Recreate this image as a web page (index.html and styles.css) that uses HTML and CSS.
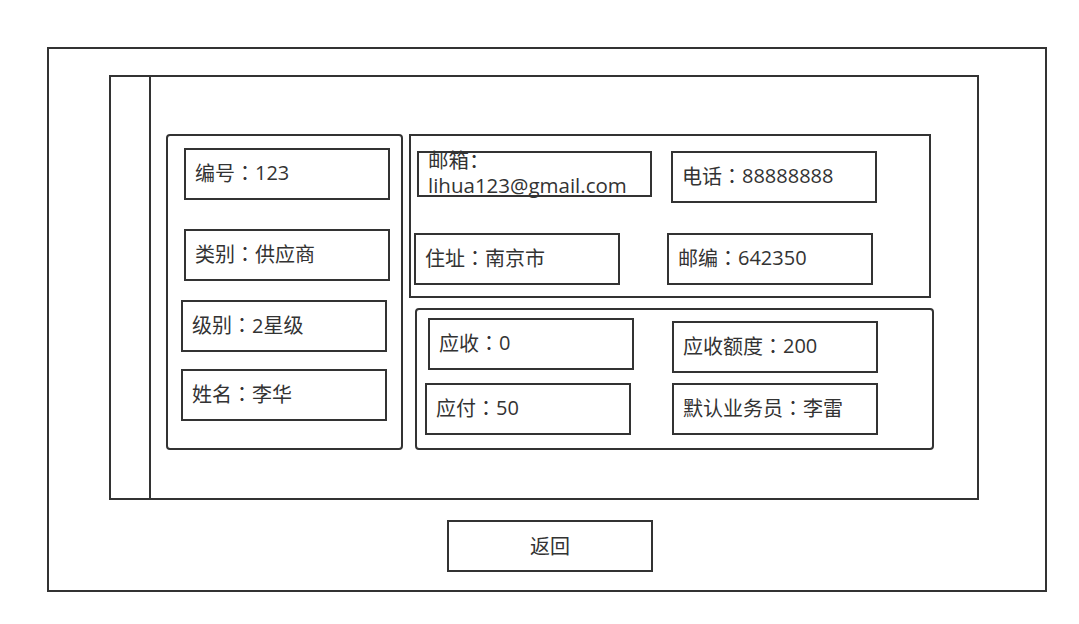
FILE: index.html
```html
<!DOCTYPE html>
<html lang="zh-CN">
  <head>
    <meta charset="UTF-8" />
    <meta name="viewport" content="width=device-width, initial-scale=1.0" />
    <title>客户详情</title>
    <link rel="stylesheet" href="styles.css">
  </head>
  <body>
    <div class="frame">
      <div class="panel">
        <div class="sidebar"></div>
        <div class="content">
          <div class="group group-left">
            <div class="field l16 t12">编号<span class="colon">：</span>123</div>
            <div class="field l16 t29">类别<span class="colon">：</span>供应商</div>
            <div class="field l13 t19">级别<span class="colon">：</span>2星级</div>
            <div class="field l13 t17">姓名<span class="colon">：</span>李华</div>
          </div>
          <div class="right">
            <div class="group group-contact">
              <div class="row">
                <div class="field field-email l6"><div class="wrap">邮箱<span class="colon">：</span>lihua123@gmail.com</div></div>
                <div class="field l19">电话<span class="colon">：</span>88888888</div>
              </div>
              <div class="row t30">
                <div class="field l3">住址<span class="colon">：</span>南京市</div>
                <div class="field l47">邮编<span class="colon">：</span>642350</div>
              </div>
            </div>
            <div class="group group-money">
              <div class="row">
                <div class="field l11">应收<span class="colon">：</span>0</div>
                <div class="field l38 t3">应收额度<span class="colon">：</span>200</div>
              </div>
              <div class="row t10">
                <div class="field l8">应付<span class="colon">：</span>50</div>
                <div class="field l41">默认业务员<span class="colon">：</span>李雷</div>
              </div>
            </div>
          </div>
        </div>
      </div>
      <button class="back" type="button">返回</button>
    </div>
  </body>
</html>
```

FILE: styles.css
```css
body {
  margin: 0;
  background: #fff;
  color: #333;
  font-family: "Open Sans", "Noto Sans CJK SC", sans-serif;
}
.frame {
  width: 1000px;
  height: 545px;
  margin: 47px 0 0 47px;
  border: 2px solid #333;
  box-sizing: border-box;
  padding-top: 26px;
}
.panel {
  display: flex;
  width: 870px;
  height: 425px;
  margin-left: 60px;
  border: 2px solid #333;
  box-sizing: border-box;
}
.sidebar {
  width: 38px;
  border-right: 2px solid #333;
}
.content {
  display: flex;
  align-items: flex-start;
  padding: 57px 0 0 15px;
}
.group {
  border: 2px solid #333;
  box-sizing: border-box;
}
.group-left {
  display: flex;
  flex-direction: column;
  width: 237px;
  height: 316px;
  border-radius: 4px;
}
.right {
  display: flex;
  flex-direction: column;
  margin-left: 6px;
}
.group-contact {
  width: 522px;
  height: 164px;
  padding-top: 15px;
}
.group-money {
  width: 519px;
  height: 142px;
  margin: 10px 0 0 6px;
  padding-top: 8px;
  border-radius: 4px;
}
.row {
  display: flex;
  align-items: flex-start;
}
.field {
  display: flex;
  align-items: center;
  width: 206px;
  height: 52px;
  padding: 0 0 3px 9px;
  border: 2px solid #333;
  box-sizing: border-box;
  font-size: 20px;
  white-space: nowrap;
}
.colon {
  font-family: "Noto Sans CJK TC", sans-serif;
}
.field-email {
  align-items: flex-start;
  width: 235px;
  height: 46px;
  padding-bottom: 0;
  white-space: normal;
  overflow: visible;
}
.field-email .wrap {
  margin-top: -6px;
  line-height: 25px;
  font-size: 20.5px;
}
.back {
  display: block;
  width: 206px;
  height: 52px;
  margin: 20px 0 0 398px;
  padding-bottom: 3px;
  border: 2px solid #333;
  background: #fff;
  color: #333;
  font-family: "Open Sans", "Noto Sans CJK SC", sans-serif;
  font-size: 20px;
  cursor: pointer;
}
.l3 { margin-left: 3px; }
.l6 { margin-left: 6px; }
.l8 { margin-left: 8px; }
.l11 { margin-left: 11px; }
.l13 { margin-left: 13px; }
.l16 { margin-left: 16px; }
.l19 { margin-left: 19px; }
.l38 { margin-left: 38px; }
.l41 { margin-left: 41px; }
.l47 { margin-left: 47px; }
.t3 { margin-top: 3px; }
.t10 { margin-top: 10px; }
.t12 { margin-top: 12px; }
.t17 { margin-top: 17px; }
.t19 { margin-top: 19px; }
.t29 { margin-top: 29px; }
.t30 { margin-top: 30px; }
```
